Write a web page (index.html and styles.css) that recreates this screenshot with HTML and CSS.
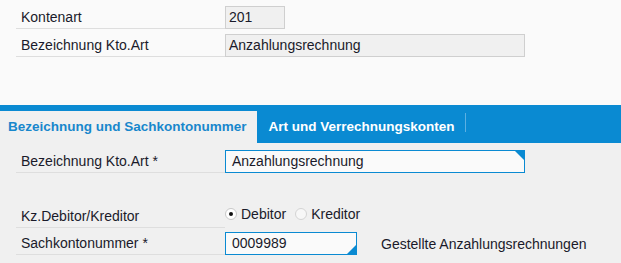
FILE: index.html
```html
<!DOCTYPE html>
<html lang="de">

<head>
    <meta charset="UTF-8">
    <title>Kontenart</title>
    <link rel="stylesheet" href="styles.css">
</head>

<body>
    <div class="header">
        <div class="row">
            <div class="label">Kontenart</div>
            <div class="field readonly short">201</div>
        </div>
        <div class="row">
            <div class="label">Bezeichnung Kto.Art</div>
            <div class="field readonly wide">Anzahlungsrechnung</div>
        </div>
    </div>

    <div class="tabs">
        <div class="tab active">Bezeichnung und Sachkontonummer</div>
        <div class="tab">Art und Verrechnungskonten</div>
    </div>

    <div class="content">
        <div class="row">
            <div class="label">Bezeichnung Kto.Art *</div>
            <div class="field edit wide corner-top">Anzahlungsrechnung</div>
        </div>
        <div class="row radio-row">
            <div class="label">Kz.Debitor/Kreditor</div>
            <div class="radios">
                <span class="radio checked"></span><span class="radio-text">Debitor</span>
                <span class="radio"></span><span class="radio-text">Kreditor</span>
            </div>
        </div>
        <div class="row">
            <div class="label">Sachkontonummer *</div>
            <div class="field edit number corner-bottom">0009989</div>
            <div class="description">Gestellte Anzahlungsrechnungen</div>
        </div>
    </div>
</body>

</html>
```

FILE: styles.css
```css
body {
    margin: 0;
    font-family: "Liberation Sans", Arial, sans-serif;
    font-size: 14px;
    color: #1a1a2a;
    background-color: #f0f0f0;
}

.header {
    background-color: #fafafa;
    height: 105px;
    box-sizing: border-box;
    padding: 6px 0 0 16px;
}

.row {
    display: flex;
    align-items: flex-end;
    margin-bottom: 5px;
}

.label {
    width: 209px;
    box-sizing: border-box;
    padding-left: 5px;
    height: 23px;
    line-height: 22px;
    border-bottom: 1px solid #dedede;
}

.field {
    height: 23px;
    line-height: 21px;
    box-sizing: border-box;
    border: 1px solid #cfcfcf;
    white-space: nowrap;
}

.readonly {
    background-color: #f0f0f0;
    padding-left: 3px;
}

.short {
    width: 60px;
}

.wide {
    width: 300px;
}

.number {
    width: 132px;
}

.edit {
    position: relative;
    background-color: #fafafa;
    border-color: #0a8ad2;
    padding-left: 6px;
}

.corner-top::after,
.corner-bottom::after {
    content: "";
    position: absolute;
    right: 0;
    width: 0;
    height: 0;
    border-style: solid;
}

.corner-top::after {
    top: 0;
    border-width: 0 9px 9px 0;
    border-color: transparent #0a8ad2 transparent transparent;
}

.corner-bottom::after {
    bottom: 0;
    border-width: 0 0 9px 9px;
    border-color: transparent transparent #0a8ad2 transparent;
}

.tabs {
    display: flex;
    background-color: #0a8ad2;
    height: 38px;
    box-sizing: border-box;
    padding-top: 6px;
}

.tab {
    height: 32px;
    line-height: 32px;
    padding: 0 10px 0 8px;
    font-size: 13.5px;
    font-weight: bold;
    color: #ffffff;
    white-space: nowrap;
}

.tab.active {
    background-color: #f0f0f0;
    color: #1887cc;
}

.tab + .tab {
    padding: 0 11px 0 12px;
    position: relative;
}

.tab + .tab::after {
    content: "";
    position: absolute;
    right: 0;
    top: 2px;
    height: 19px;
    border-right: 1px solid #5cb0e2;
}

.content {
    padding: 7px 0 0 16px;
}

.radio-row {
    margin-top: 32px;
    margin-bottom: 4px;
}

.radios {
    display: flex;
    align-items: center;
    align-self: flex-start;
    height: 18px;
}

.radio {
    width: 10px;
    height: 10px;
    border: 1px solid #d4d4d4;
    border-radius: 50%;
    background-color: #f7f7f7;
    position: relative;
    margin-right: 4px;
}

.radio.checked {
    background-color: #ffffff;
    border-color: #c8c8c8;
}

.radio.checked::after {
    content: "";
    position: absolute;
    left: 3px;
    top: 3px;
    width: 4px;
    height: 4px;
    border-radius: 50%;
    background-color: #111111;
}

.radio-text {
    margin-right: 9px;
}

.description {
    align-self: center;
    margin-left: 24px;
}
```
